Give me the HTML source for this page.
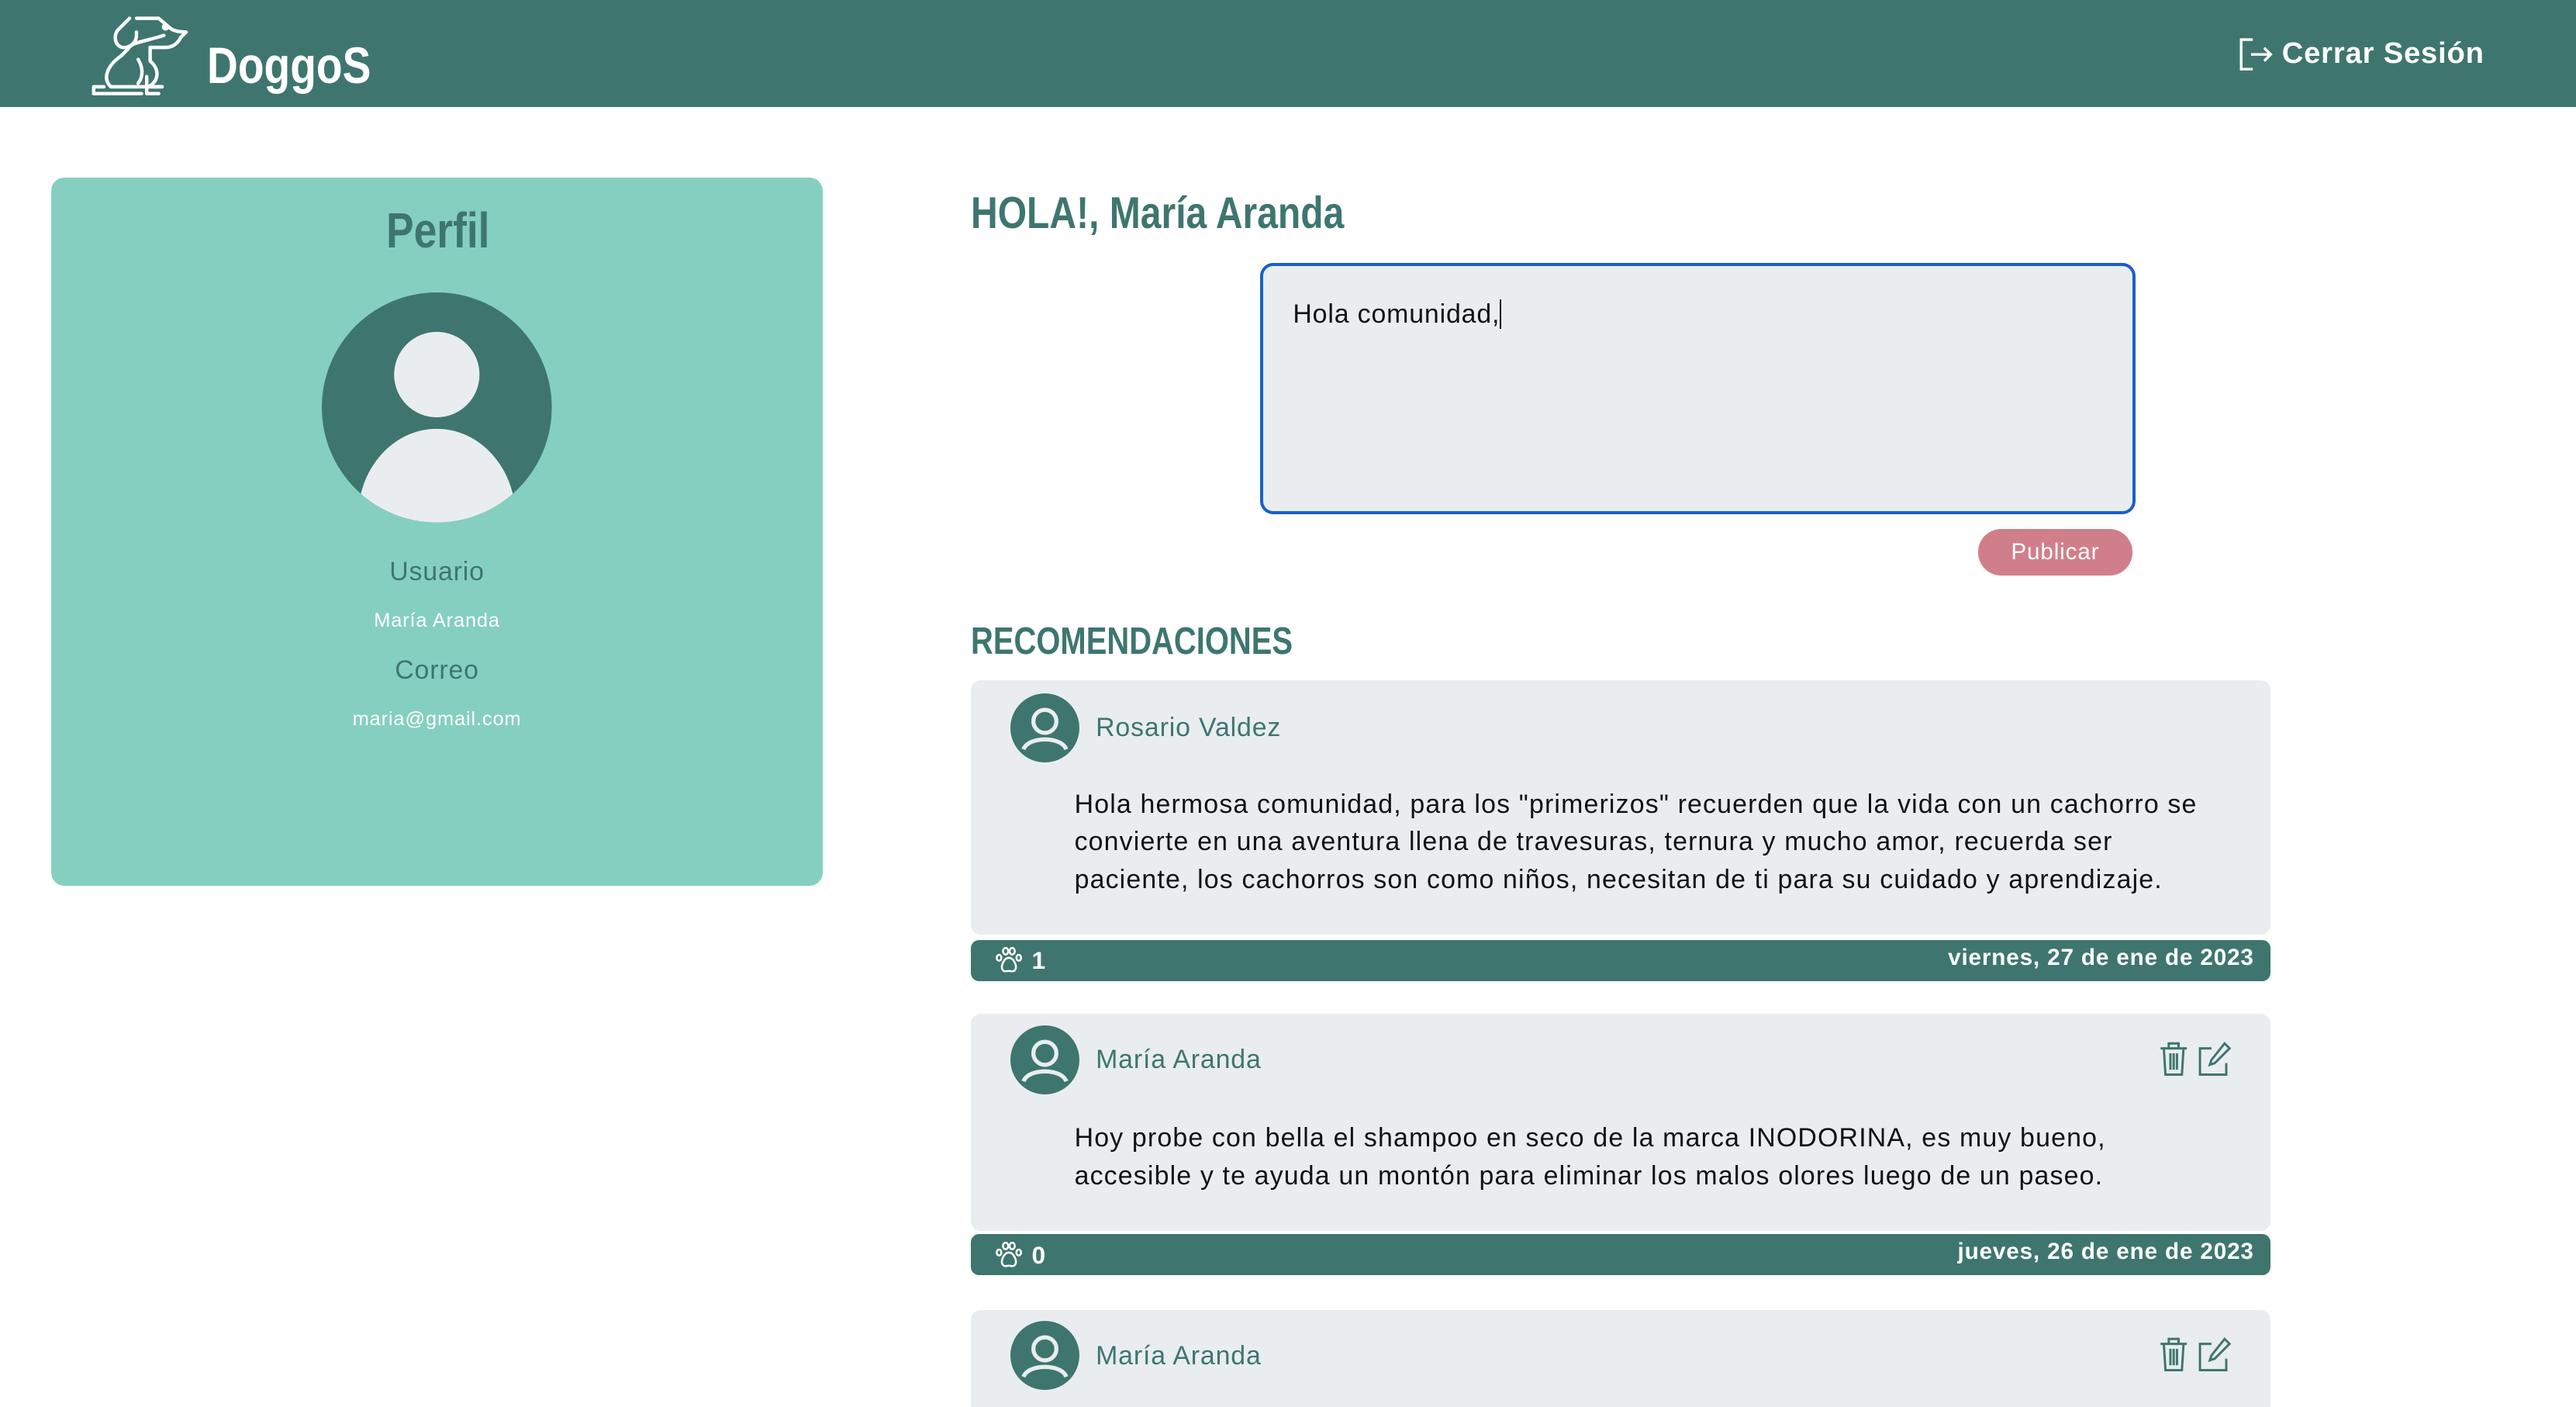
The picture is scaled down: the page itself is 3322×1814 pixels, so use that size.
<!DOCTYPE html>
<html><head><meta charset="utf-8"><style>
html,body{margin:0;padding:0;background:#fff;overflow:hidden}
#w{zoom:2.11862;width:1568px;height:856px;position:relative;font-family:"Liberation Sans",sans-serif;overflow:hidden;letter-spacing:0.4px}
.a{position:absolute}
.hdr{left:0;top:0;width:1568px;height:65px;background:#3e766f}
.card{background:#e9edf0;border-radius:6px;left:591px;width:791px}
.bar{background:#3e766f;border-radius:5px;left:591px;width:791px;height:25px;color:#fff;font-weight:bold;font-size:14px}
.nm{color:#3e766f;font-size:16px}
.tx{font-size:16px;color:#111;line-height:23px;left:654px;width:700px;letter-spacing:0.55px}
.cn{transform-origin:0 0;letter-spacing:0}
</style></head><body><div id="w">
<div class="a hdr"></div>
<svg class="a" style="left:48px;top:8px" width="74" height="50" viewBox="0 1 58 48" fill="none" stroke="#fff" stroke-width="2" stroke-linejoin="round" stroke-linecap="round">
<path d="M43 14 C30 18 24 18 22 22 L18 26 C12 30 6 38 12 44 L42 44"/>
<path d="M23 4 L16 11 C13 15 15 22 21 21 C25 20 27 17 27 14 L27 12 M27 4 L40 4 L47 10 C50 12 55 12 56 12 L53 15 C51 19 48 21 44 21 L35 21"/>
<circle cx="44" cy="9" r="1.2" fill="#fff"/>
<path d="M35 21 L35 29 C40 33 41 40 34 44 L42 44 M28 28 C31 33 31 38 28 42 M8 44 L2 44 L2 48 L30 48 M33 38 L33 48 L40 48"/>
</svg>
<div class="a cn" style="left:126px;top:22px;color:#fff;font-weight:bold;font-size:31px;transform:scaleX(0.84)">DoggoS</div>
<svg class="a" style="left:1362px;top:23px" width="22" height="20" viewBox="0 0 22 20" fill="none" stroke="#fff" stroke-width="1.6"><path d="M9 1 H2 V19 H9 M8 10 H20 M16 6 L20 10 L16 14"/></svg>
<div class="a" style="left:1389px;top:22px;color:#fff;font-size:18px;font-weight:bold">Cerrar Sesión</div>

<div class="a" style="left:31px;top:108px;width:470px;height:431px;background:#85cfc1;border-radius:8px"></div>
<div class="a cn" style="left:235px;top:123px;color:#3e766f;font-weight:bold;font-size:30px;transform:scaleX(0.84)">Perfil</div>
<svg class="a" style="left:196px;top:178px" width="140" height="140" viewBox="0 0 140 140"><defs><clipPath id="c"><circle cx="70" cy="70" r="70"/></clipPath></defs><circle cx="70" cy="70" r="70" fill="#3e766f"/><circle cx="70" cy="50" r="26" fill="#e9edf0"/><ellipse cx="70" cy="137" rx="48" ry="54" fill="#e9edf0" clip-path="url(#c)"/></svg>
<div class="a" style="left:31px;top:339px;width:470px;text-align:center;color:#3e766f;font-size:16px">Usuario</div>
<div class="a" style="left:31px;top:371px;width:470px;text-align:center;color:#fff;font-size:12px">María Aranda</div>
<div class="a" style="left:31px;top:399px;width:470px;text-align:center;color:#3e766f;font-size:16px">Correo</div>
<div class="a" style="left:31px;top:431px;width:470px;text-align:center;color:#fff;font-size:12px">maria@gmail.com</div>

<div class="a cn" style="left:591px;top:114px;color:#3e766f;font-weight:bold;font-size:27px;transform:scaleX(0.84)">HOLA!, María Aranda</div>
<div class="a" style="left:767px;top:160px;width:529px;height:149px;border:2px solid #1a5fc9;border-radius:8px;background:#e9edf0"></div>
<div class="a" style="left:787px;top:182px;font-size:16px;color:#111">Hola comunidad, <span style="border-left:1px solid #111"></span></div>
<div class="a" style="left:1204px;top:322px;width:94px;height:28px;border-radius:14px;background:#d07f8a;color:#fff;font-size:14px;text-align:center;line-height:28px">Publicar</div>
<div class="a cn" style="left:591px;top:377px;color:#3e766f;font-weight:bold;font-size:23px;transform:scaleX(0.82)">RECOMENDACIONES</div>

<div class="a card" style="top:414px;height:155px"></div>
<svg class="a" style="left:615px;top:422px" width="42" height="42" viewBox="0 0 42 42"><circle cx="21" cy="21" r="21" fill="#3e766f"/><circle cx="21" cy="17" r="7" fill="none" stroke="#e9edf0" stroke-width="2.5"/><path d="M8 34 C11 26 31 26 34 34" fill="none" stroke="#e9edf0" stroke-width="2.5"/></svg>
<div class="a nm" style="left:667px;top:434px">Rosario Valdez</div>
<div class="a tx" style="top:478px">Hola hermosa comunidad, para los "primerizos" recuerden que la vida con un cachorro se convierte en una aventura llena de travesuras, ternura y mucho amor, recuerda ser paciente, los cachorros son como niños, necesitan de ti para su cuidado y aprendizaje.</div>
<div class="a bar" style="top:572px"><svg class="a" style="left:14px;top:4px" width="18" height="17" viewBox="0 0 18 17" fill="none" stroke="#fff" stroke-width="1.2"><ellipse cx="7" cy="3" rx="1.6" ry="2"/><ellipse cx="11" cy="3" rx="1.6" ry="2"/><ellipse cx="3" cy="7" rx="1.4" ry="1.8"/><ellipse cx="15" cy="7" rx="1.4" ry="1.8"/><path d="M9 7 C6 7 4 12 5 14 C6 16 8 15 9 15 C10 15 12 16 13 14 C14 12 12 7 9 7 Z"/></svg><span class="a" style="left:37px;top:4px;font-size:15px">1</span><span class="a" style="right:10px;top:3px">viernes, 27 de ene de 2023</span></div>

<div class="a card" style="top:617px;height:132px"></div>
<svg class="a" style="left:615px;top:624px" width="42" height="42" viewBox="0 0 42 42"><circle cx="21" cy="21" r="21" fill="#3e766f"/><circle cx="21" cy="17" r="7" fill="none" stroke="#e9edf0" stroke-width="2.5"/><path d="M8 34 C11 26 31 26 34 34" fill="none" stroke="#e9edf0" stroke-width="2.5"/></svg>
<div class="a nm" style="left:667px;top:636px">María Aranda</div>
<svg class="a" style="left:1313px;top:633px" width="48" height="24" viewBox="0 0 48 24" fill="none" stroke="#3e766f" stroke-width="1.4"><path d="M2 5 H18 M7 5 V2 H13 V5 M4 5 L5 21 H15 L16 5 M8 8 V18 M10 8 V18 M12 8 V18"/><path d="M33 5 H26 V21 H42 V14 M41 2 L44 5 L35 14 L32 15 L33 12 Z"/></svg>
<div class="a tx" style="top:681px;width:660px">Hoy probe con bella el shampoo en seco de la marca INODORINA, es muy bueno, accesible y te ayuda un montón para eliminar los malos olores luego de un paseo.</div>
<div class="a bar" style="top:751px"><svg class="a" style="left:14px;top:4px" width="18" height="17" viewBox="0 0 18 17" fill="none" stroke="#fff" stroke-width="1.2"><ellipse cx="7" cy="3" rx="1.6" ry="2"/><ellipse cx="11" cy="3" rx="1.6" ry="2"/><ellipse cx="3" cy="7" rx="1.4" ry="1.8"/><ellipse cx="15" cy="7" rx="1.4" ry="1.8"/><path d="M9 7 C6 7 4 12 5 14 C6 16 8 15 9 15 C10 15 12 16 13 14 C14 12 12 7 9 7 Z"/></svg><span class="a" style="left:37px;top:4px;font-size:15px">0</span><span class="a" style="right:10px;top:3px">jueves, 26 de ene de 2023</span></div>

<div class="a card" style="top:797px;height:80px"></div>
<svg class="a" style="left:615px;top:804px" width="42" height="42" viewBox="0 0 42 42"><circle cx="21" cy="21" r="21" fill="#3e766f"/><circle cx="21" cy="17" r="7" fill="none" stroke="#e9edf0" stroke-width="2.5"/><path d="M8 34 C11 26 31 26 34 34" fill="none" stroke="#e9edf0" stroke-width="2.5"/></svg>
<div class="a nm" style="left:667px;top:816px">María Aranda</div>
<svg class="a" style="left:1313px;top:813px" width="48" height="24" viewBox="0 0 48 24" fill="none" stroke="#3e766f" stroke-width="1.4"><path d="M2 5 H18 M7 5 V2 H13 V5 M4 5 L5 21 H15 L16 5 M8 8 V18 M10 8 V18 M12 8 V18"/><path d="M33 5 H26 V21 H42 V14 M41 2 L44 5 L35 14 L32 15 L33 12 Z"/></svg>
</div></body></html>
